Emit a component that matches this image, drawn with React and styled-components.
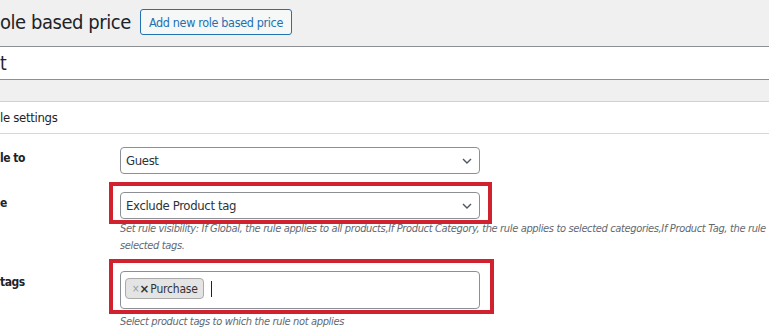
import React from "react";
import styled, { createGlobalStyle } from "styled-components";

const FONT = `"Liberation Sans Narrow", "Arial Narrow", "DejaVu Sans Condensed", sans-serif`;

const Global = createGlobalStyle`
  html, body { margin: 0; padding: 0; background: #f0f0f1; overflow: hidden; }
  body { font-family: ${FONT}; color: #1d2327; }
  * { box-sizing: border-box; }
`;

const Page = styled.div`
  display: flex;
  flex-direction: column;
  width: 769px;
  height: 330px;
  overflow: hidden;
`;

const HeaderRow = styled.div`
  display: flex;
  align-items: center;
  gap: 9px;
  height: 46px;
  padding-bottom: 2px;
`;

const Title = styled.h1`
  margin: 0;
  font-size: 20px;
  letter-spacing: -0.45px;
  font-weight: 400;
  line-height: 1;
  white-space: nowrap;
  color: #1d2327;
`;

const AddButton = styled.button`
  font-family: inherit;
  font-size: 12.5px;
  letter-spacing: -0.35px;
  color: #2271b1;
  background: #f6f7f7;
  border: 1px solid #2271b1;
  border-radius: 3px;
  height: 26px;
  padding: 0 8px;
  white-space: nowrap;
`;

const TitleInput = styled.div`
  height: 34px;
  background: #fff;
  border-top: 1px solid #8c8f94;
  border-bottom: 1px solid #8c8f94;
  display: flex;
  align-items: center;
  font-size: 19px;
  margin-bottom: 21px;
`;

const Panel = styled.section`
  flex: 1;
  background: #fff;
  border-top: 1px solid #d0d1d3;
  display: flex;
  flex-direction: column;
`;

const PanelHeader = styled.h2`
  margin: 0;
  height: 32px;
  border-bottom: 1px solid #d6d7d9;
  display: flex;
  align-items: center;
  font-size: 13px;
  letter-spacing: -0.3px;
  font-weight: 400;
  white-space: nowrap;
`;

const Form = styled.div`
  display: flex;
  flex-direction: column;
  padding-top: 13px;
`;

const FormRow = styled.div`
  display: grid;
  grid-template-columns: 120px 360px;
  align-items: start;
  margin-top: ${(p) => p.$gap || 0}px;
`;

const Label = styled.div`
  font-size: 12px;
  letter-spacing: -0.5px;
  font-weight: 700;
  line-height: 20px;
  padding-top: 1px;
  white-space: nowrap;
`;

const Field = styled.div`
  display: flex;
  flex-direction: column;
`;

const Highlight = styled.div`
  position: relative;
  &::after {
    content: "";
    position: absolute;
    top: ${(p) => p.$t}px;
    left: ${(p) => p.$l}px;
    right: ${(p) => p.$r}px;
    bottom: ${(p) => p.$b}px;
    border: 4px solid #d0212f;
    pointer-events: none;
  }
`;

const Select = styled.div`
  height: 27px;
  border: 1px solid #8c8f94;
  border-radius: 4px;
  background: #fff;
  display: flex;
  align-items: center;
  justify-content: space-between;
  padding: 0 7px 0 5px;
  font-size: 13px;
  letter-spacing: -0.35px;
  color: #2c3338;
`;

const Chevron = styled.svg`
  width: 10px;
  height: 6px;
`;

const Help = styled.p`
  margin: ${(p) => p.$mt || 0}px 0 0;
  font-size: 11px;
  letter-spacing: -0.35px;
  line-height: 17px;
  font-style: italic;
  color: #646970;
  white-space: nowrap;
`;

const TagInput = styled.div`
  height: 38px;
  border: 1px solid #8c8f94;
  border-radius: 4px;
  background: #fff;
  display: flex;
  align-items: flex-start;
  gap: 7px;
  padding: 6px 4px 0;
`;

const Chip = styled.span`
  height: 21px;
  display: inline-flex;
  align-items: center;
  padding: 0 5px 0 6px;
  background: #e4e4e4;
  border: 1px solid #aaa;
  border-radius: 4px;
  font-size: 12px;
  letter-spacing: -0.2px;
  color: #333;
`;

const RemoveSmall = styled.span`
  font-size: 10px;
  color: #999;
  letter-spacing: 0;
`;

const RemoveBold = styled.span`
  font-size: 13px;
  font-weight: 700;
  color: #333;
  margin-right: 1px;
  letter-spacing: 0;
`;

const Caret = styled.span`
  width: 1px;
  height: 16px;
  margin-top: 3px;
  background: #1d2327;
`;

const SelectBox = ({ value }) => (
  <Select>
    <span>{value}</span>
    <Chevron viewBox="0 0 10 6">
      <path d="M1 1 L5 5 L9 1" fill="none" stroke="#50575e" strokeWidth="1.4" />
    </Chevron>
  </Select>
);

export default function App() {
  return (
    <>
      <Global />
      <Page>
        <HeaderRow>
          <Title>ole based price</Title>
          <AddButton>Add new role based price</AddButton>
        </HeaderRow>
        <TitleInput>t</TitleInput>
        <Panel>
          <PanelHeader>le settings</PanelHeader>
          <Form>
            <FormRow>
              <Label>le to</Label>
              <Field>
                <SelectBox value="Guest" />
              </Field>
            </FormRow>
            <FormRow $gap={18}>
              <Label>e</Label>
              <Field>
                <Highlight $t={-10} $l={-11} $r={-12} $b={-5}>
                  <SelectBox value="Exclude Product tag" />
                </Highlight>
                <Help $mt={1}>
                  Set rule visibility: If Global, the rule applies to all products,If Product Category, the rule applies to selected categories,If Product Tag, the rule
                  <br />
                  selected tags.
                </Help>
              </Field>
            </FormRow>
            <FormRow $gap={17}>
              <Label>tags</Label>
              <Field>
                <Highlight $t={-12} $l={-11} $r={-14} $b={-5}>
                  <TagInput>
                    <Chip>
                      <RemoveSmall>×</RemoveSmall>
                      <RemoveBold>×</RemoveBold>
                      Purchase
                    </Chip>
                    <Caret />
                  </TagInput>
                </Highlight>
                <Help $mt={4}>Select product tags to which the rule not applies</Help>
              </Field>
            </FormRow>
          </Form>
        </Panel>
      </Page>
    </>
  );
}
